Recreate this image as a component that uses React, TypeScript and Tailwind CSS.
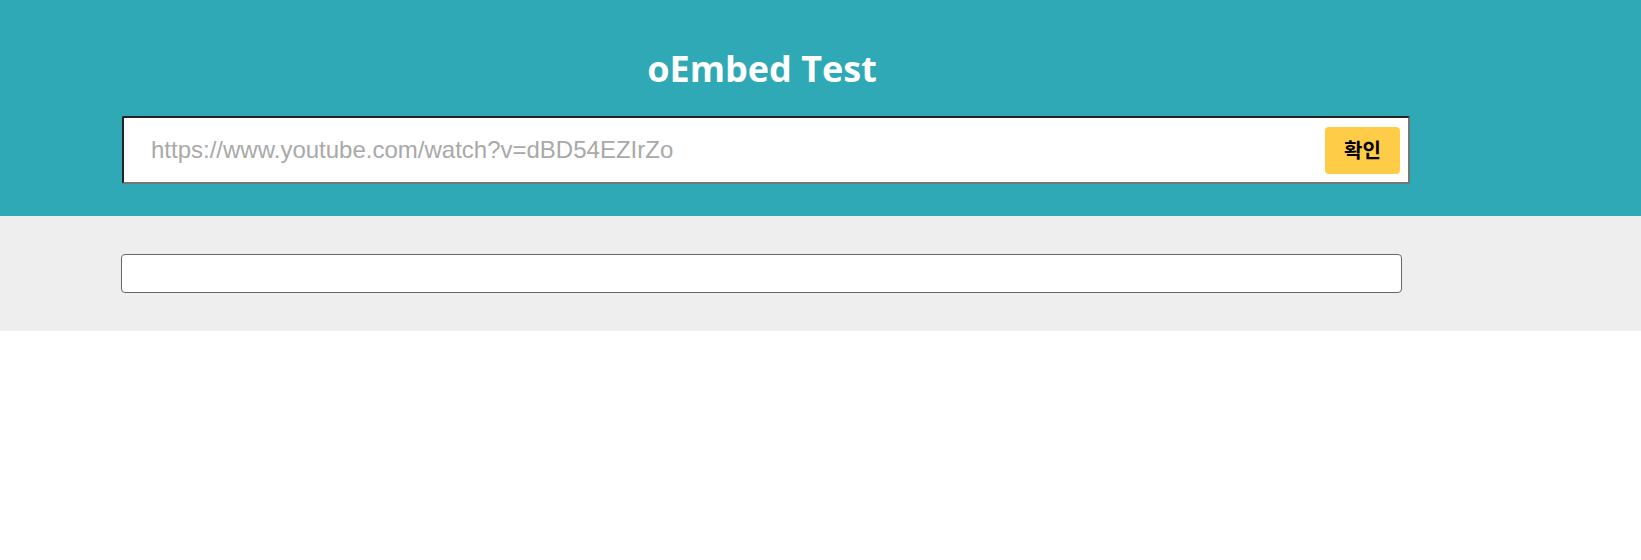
import { useState } from 'react';

export default function App() {
  const [url, setUrl] = useState('');

  return (
    <div className="min-h-screen bg-white" style={{ fontFamily: '"Open Sans", "Noto Sans CJK KR", sans-serif' }}>
      {/* Header with search form */}
      <header className="bg-[#2ea9b5] h-[216px] pt-[44px]">
        <div className="ml-[122px] w-[1288px]">
          <h1 className="text-center text-white text-[36px] leading-[50px] font-bold pr-[8px]">oEmbed Test</h1>
          <form
            className="mt-[22px] h-[68px] flex items-center bg-white border-2 border-t-[#222] border-l-[#222] border-r-[#767676] border-b-[#767676] rounded-[2px] pl-[27px] pr-[8px]"
            onSubmit={(e) => e.preventDefault()}
          >
            <input
              value={url}
              onChange={(e) => setUrl(e.target.value)}
              placeholder="https://www.youtube.com/watch?v=dBD54EZIrZo"
              className="flex-1 outline-none bg-transparent text-[24px] text-[#333] placeholder:text-[#a9a9a9] font-['Liberation_Sans',Arial,sans-serif]"
            />
            <button
              type="submit"
              className="w-[75px] h-[47px] rounded-[4px] bg-[#ffcc47] text-black text-[20px] font-semibold font-['Noto_Sans_CJK_KR',sans-serif]"
            >
              확인
            </button>
          </form>
        </div>
      </header>

      {/* Result area */}
      <section className="bg-[#eeeeee] pt-[38px] pb-[38px]">
        <div className="ml-[121px] w-[1281px] h-[39px] bg-white border border-[#666] rounded-[4px]" />
      </section>
    </div>
  );
}
